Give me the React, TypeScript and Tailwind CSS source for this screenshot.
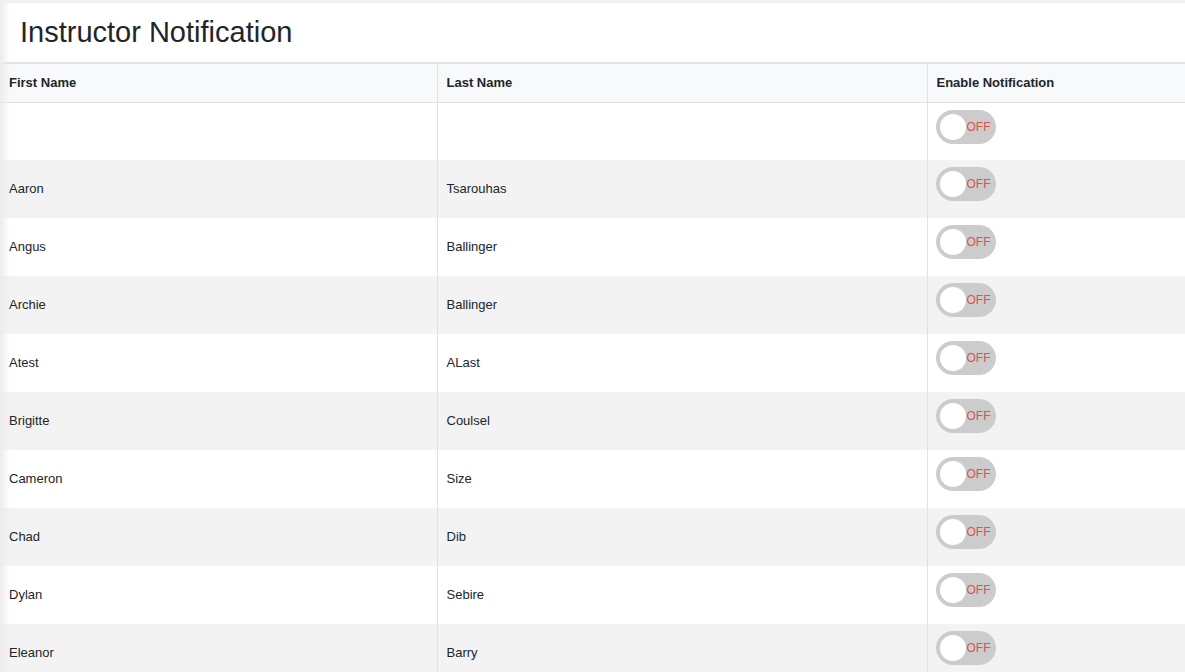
import React from 'react';

const rows: [string, string][] = [
  ['', ''],
  ['Aaron', 'Tsarouhas'],
  ['Angus', 'Ballinger'],
  ['Archie', 'Ballinger'],
  ['Atest', 'ALast'],
  ['Brigitte', 'Coulsel'],
  ['Cameron', 'Size'],
  ['Chad', 'Dib'],
  ['Dylan', 'Sebire'],
  ['Eleanor', 'Barry'],
];

function Toggle() {
  return (
    <div className="relative w-[60px] h-[34px] rounded-full bg-[#cccccc]">
      <span className="absolute left-[4px] top-[4px] w-[26px] h-[26px] rounded-full bg-white" />
      <span className="absolute left-[31px] top-0 leading-[34px] text-[12px] text-[#d9534f]">OFF</span>
    </div>
  );
}

export default function App() {
  return (
    <div className="w-[1185px] h-[672px] overflow-hidden bg-white font-['Liberation_Sans',Arial,sans-serif] text-[#212529]">
      <div className="h-[3px] bg-[#f0f1f4]" />
      <div className="relative">
        <div className="absolute left-0 top-0 bottom-0 w-[10px] bg-gradient-to-r from-[#ececec] to-transparent pointer-events-none z-10" />
        <h1 className="h-[59px] pl-[20px] pt-[12px] text-[29px] leading-[34px] font-normal">Instructor Notification</h1>
        <table className="w-full border-collapse text-[13px]">
          <thead>
            <tr className="bg-[#f8f9fa] border-t-2 border-[#dee2e6]">
              <th className="w-[437px] h-[39px] px-[9px] text-left font-bold border-r border-b border-[#dee2e6]">First Name</th>
              <th className="w-[490px] px-[9px] text-left font-bold border-r border-b border-[#dee2e6]">Last Name</th>
              <th className="px-[9px] text-left font-bold border-b border-[#dee2e6]">Enable Notification</th>
            </tr>
          </thead>
          <tbody>
            {rows.map(([first, last], i) => (
              <tr key={i} className={i % 2 === 1 ? 'bg-[#f3f3f3]' : 'bg-white'}>
                <td className="h-[58px] px-[9px] border-r border-[#dee2e6]">{first}</td>
                <td className="px-[9px] border-r border-[#dee2e6]">{last}</td>
                <td className="px-[8px] pt-[7px] align-top">
                  <Toggle />
                </td>
              </tr>
            ))}
          </tbody>
        </table>
      </div>
    </div>
  );
}
